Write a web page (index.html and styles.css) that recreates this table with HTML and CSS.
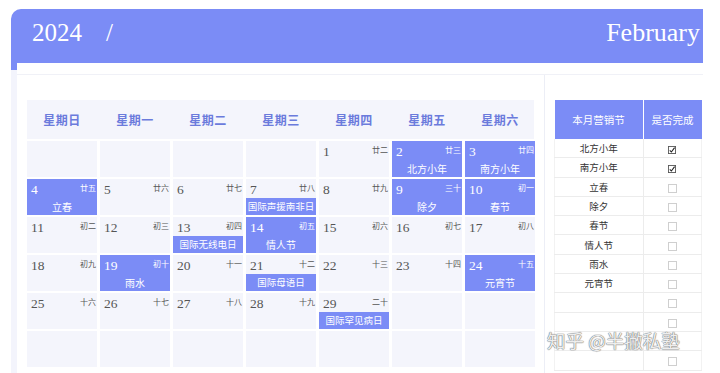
FILE: index.html
```html
<!DOCTYPE html>
<html lang="zh">
<head>
<meta charset="utf-8">
<link rel="stylesheet" href="styles.css">
</head>
<body>
<div class="page">
  <header class="banner">
    <span class="year">2024</span><span class="slash">/</span>
    <span class="month">February</span>
  </header>
  <div class="body">
    <div class="inner">
      <section class="cal">
        <div class="weekdays">
          <div>星期日</div><div>星期一</div><div>星期二</div><div>星期三</div><div>星期四</div><div>星期五</div><div>星期六</div>
        </div>
        <div class="grid">
          <div class="cell"></div><div class="cell"></div><div class="cell"></div><div class="cell"></div>
          <div class="cell"><div class="top"><span class="num">1</span><span class="lunar">廿二</span></div></div>
          <div class="cell hot"><div class="top"><span class="num">2</span><span class="lunar">廿三</span></div><div class="ev">北方小年</div></div>
          <div class="cell hot"><div class="top"><span class="num">3</span><span class="lunar">廿四</span></div><div class="ev">南方小年</div></div>

          <div class="cell hot"><div class="top"><span class="num">4</span><span class="lunar">廿五</span></div><div class="ev">立春</div></div>
          <div class="cell"><div class="top"><span class="num">5</span><span class="lunar">廿六</span></div></div>
          <div class="cell"><div class="top"><span class="num">6</span><span class="lunar">廿七</span></div></div>
          <div class="cell"><div class="top"><span class="num">7</span><span class="lunar">廿八</span></div><div class="ev band">国际声援南非日</div></div>
          <div class="cell"><div class="top"><span class="num">8</span><span class="lunar">廿九</span></div></div>
          <div class="cell hot"><div class="top"><span class="num">9</span><span class="lunar">三十</span></div><div class="ev">除夕</div></div>
          <div class="cell hot"><div class="top"><span class="num">10</span><span class="lunar">初一</span></div><div class="ev">春节</div></div>

          <div class="cell"><div class="top"><span class="num">11</span><span class="lunar">初二</span></div></div>
          <div class="cell"><div class="top"><span class="num">12</span><span class="lunar">初三</span></div></div>
          <div class="cell"><div class="top"><span class="num">13</span><span class="lunar">初四</span></div><div class="ev band">国际无线电日</div></div>
          <div class="cell hot"><div class="top"><span class="num">14</span><span class="lunar">初五</span></div><div class="ev">情人节</div></div>
          <div class="cell"><div class="top"><span class="num">15</span><span class="lunar">初六</span></div></div>
          <div class="cell"><div class="top"><span class="num">16</span><span class="lunar">初七</span></div></div>
          <div class="cell"><div class="top"><span class="num">17</span><span class="lunar">初八</span></div></div>

          <div class="cell"><div class="top"><span class="num">18</span><span class="lunar">初九</span></div></div>
          <div class="cell hot"><div class="top"><span class="num">19</span><span class="lunar">初十</span></div><div class="ev">雨水</div></div>
          <div class="cell"><div class="top"><span class="num">20</span><span class="lunar">十一</span></div></div>
          <div class="cell"><div class="top"><span class="num">21</span><span class="lunar">十二</span></div><div class="ev band">国际母语日</div></div>
          <div class="cell"><div class="top"><span class="num">22</span><span class="lunar">十三</span></div></div>
          <div class="cell"><div class="top"><span class="num">23</span><span class="lunar">十四</span></div></div>
          <div class="cell hot"><div class="top"><span class="num">24</span><span class="lunar">十五</span></div><div class="ev">元宵节</div></div>

          <div class="cell"><div class="top"><span class="num">25</span><span class="lunar">十六</span></div></div>
          <div class="cell"><div class="top"><span class="num">26</span><span class="lunar">十七</span></div></div>
          <div class="cell"><div class="top"><span class="num">27</span><span class="lunar">十八</span></div></div>
          <div class="cell"><div class="top"><span class="num">28</span><span class="lunar">十九</span></div></div>
          <div class="cell"><div class="top"><span class="num">29</span><span class="lunar">二十</span></div><div class="ev band">国际罕见病日</div></div>
          <div class="cell"></div><div class="cell"></div>

          <div class="cell"></div><div class="cell"></div><div class="cell"></div><div class="cell"></div><div class="cell"></div><div class="cell"></div><div class="cell"></div>
        </div>
      </section>
      <aside class="side">
        <table class="plan">
          <thead><tr><th class="c1">本月营销节</th><th class="c2">是否完成</th></tr></thead>
          <tbody>
            <tr><td>北方小年</td><td><svg class="box" viewBox="0 0 9 9"><rect x="0.5" y="0.5" width="8" height="8" fill="none" stroke="#555"/><path d="M2 5 L3.8 6.8 L7.4 1.8" fill="none" stroke="#222" stroke-width="1.2"/></svg></td></tr>
            <tr><td>南方小年</td><td><svg class="box" viewBox="0 0 9 9"><rect x="0.5" y="0.5" width="8" height="8" fill="none" stroke="#555"/><path d="M2 5 L3.8 6.8 L7.4 1.8" fill="none" stroke="#222" stroke-width="1.2"/></svg></td></tr>
            <tr><td>立春</td><td><span class="empty"></span></td></tr>
            <tr><td>除夕</td><td><span class="empty"></span></td></tr>
            <tr><td>春节</td><td><span class="empty"></span></td></tr>
            <tr><td>情人节</td><td><span class="empty"></span></td></tr>
            <tr><td>雨水</td><td><span class="empty"></span></td></tr>
            <tr><td>元宵节</td><td><span class="empty"></span></td></tr>
            <tr><td></td><td><span class="empty"></span></td></tr>
            <tr><td></td><td><span class="empty"></span></td></tr>
            <tr><td></td><td><span class="empty"></span></td></tr>
            <tr><td></td><td><span class="empty"></span></td></tr>
          </tbody>
        </table>
      </aside>
    </div>
  </div>
  <div class="watermark">知乎 @半撇私塾</div>
</div>
</body>
</html>
```
FILE: styles.css
```css
html, body {
  margin: 0;
  padding: 0;
  background: #fff;
  height: 373px;
  overflow: hidden;
}
.page {
  position: relative;
  padding: 9px 17px 0 11px;
  font-family: "Noto Sans CJK SC", "Noto Sans", sans-serif;
}
.banner {
  height: 54px;
  background: #7b8cf6;
  border-radius: 10px 0 0 0;
  display: flex;
  align-items: center;
  padding: 0 3px 6px 21px;
  box-sizing: border-box;
  color: #fff;
  font-family: "Liberation Serif", "DejaVu Serif", serif;
  font-size: 25px;
}
.slash { margin-left: 24px; }
.month { margin-left: auto; font-size: 26px; }
.body {
  height: 310px;
  padding: 11px 0 0 6px;
  box-sizing: border-box;
  background:
    linear-gradient(#7b8cf6 0 7px, #f3f4fc 7px) left top / 6px 100% no-repeat,
    #fff;
}
.inner {
  display: flex;
  height: 100%;
  border-top: 1px solid #f0f1f7;
}
.cal {
  width: 528px;
  box-sizing: border-box;
  padding: 25px 10px 0 10px;
  border-right: 1px solid #eceef6;
}
.weekdays {
  display: grid;
  grid-template-columns: repeat(7, 70px);
  column-gap: 3px;
  height: 39px;
  background: #f4f5fc;
  margin-bottom: 2px;
}
.weekdays div {
  display: flex;
  align-items: center;
  justify-content: center;
  color: #6b7bdc;
  font-weight: 700;
  font-size: 12px;
  letter-spacing: 0.5px;
}
.grid {
  display: grid;
  grid-template-columns: repeat(7, 70px);
  grid-auto-rows: 36px;
  column-gap: 3px;
  row-gap: 2px;
}
.cell {
  background: #f4f5fc;
  display: flex;
  flex-direction: column;
  color: #555;
}
.cell.hot {
  background: #7b8cf6;
  color: #fff;
}
.top {
  display: flex;
  justify-content: space-between;
  align-items: flex-start;
  padding: 3px 0 0 4px;
}
.num {
  font-family: "Liberation Serif", "DejaVu Serif", serif;
  font-size: 13.5px;
  line-height: 15px;
}
.lunar {
  font-size: 8px;
  line-height: 10px;
  margin-top: 1px;
  padding-right: 1px;
}
.ev {
  margin-top: auto;
  height: 17px;
  line-height: 17px;
  text-align: center;
  font-size: 10px;
  color: #fff;
  white-space: nowrap;
  overflow: hidden;
}
.ev.band {
  background: #7b8cf6;
  font-size: 9.5px;
}
.side {
  flex: 1;
  padding: 25px 0 0 9px;
}
.plan {
  border-collapse: collapse;
  width: 148px;
  table-layout: fixed;
}
.plan th {
  background: #7b8cf6;
  color: #fff;
  font-weight: 400;
  font-size: 10.5px;
  height: 39px;
  padding: 0;
}
.plan th.c1 { width: 88px; border-right: 1px solid #fff; }
.plan td {
  height: 18.3px;
  padding: 0;
  text-align: center;
  font-size: 9.5px;
  color: #333;
  border-bottom: 1px solid #ececec;
  line-height: 18px;
}
.plan td:first-child { border-right: 1px solid #ececec; border-left: 1px solid #f2f2f2; }
.plan td:last-child { border-right: 1px solid #f2f2f2; }
.box {
  width: 8px;
  height: 8px;
  vertical-align: middle;
  display: inline-block;
}
.empty {
  display: inline-block;
  width: 7px;
  height: 7px;
  border: 1px solid #cfcfcf;
  vertical-align: middle;
}
.watermark {
  position: absolute;
  left: 547px;
  top: 329px;
  font-size: 18.5px;
  line-height: 22px;
  color: rgba(255,255,255,0.9);
  text-shadow: 0 0 1px #777, 0 0 1px #777, 0 0 1px #999;
  white-space: nowrap;
}
```
